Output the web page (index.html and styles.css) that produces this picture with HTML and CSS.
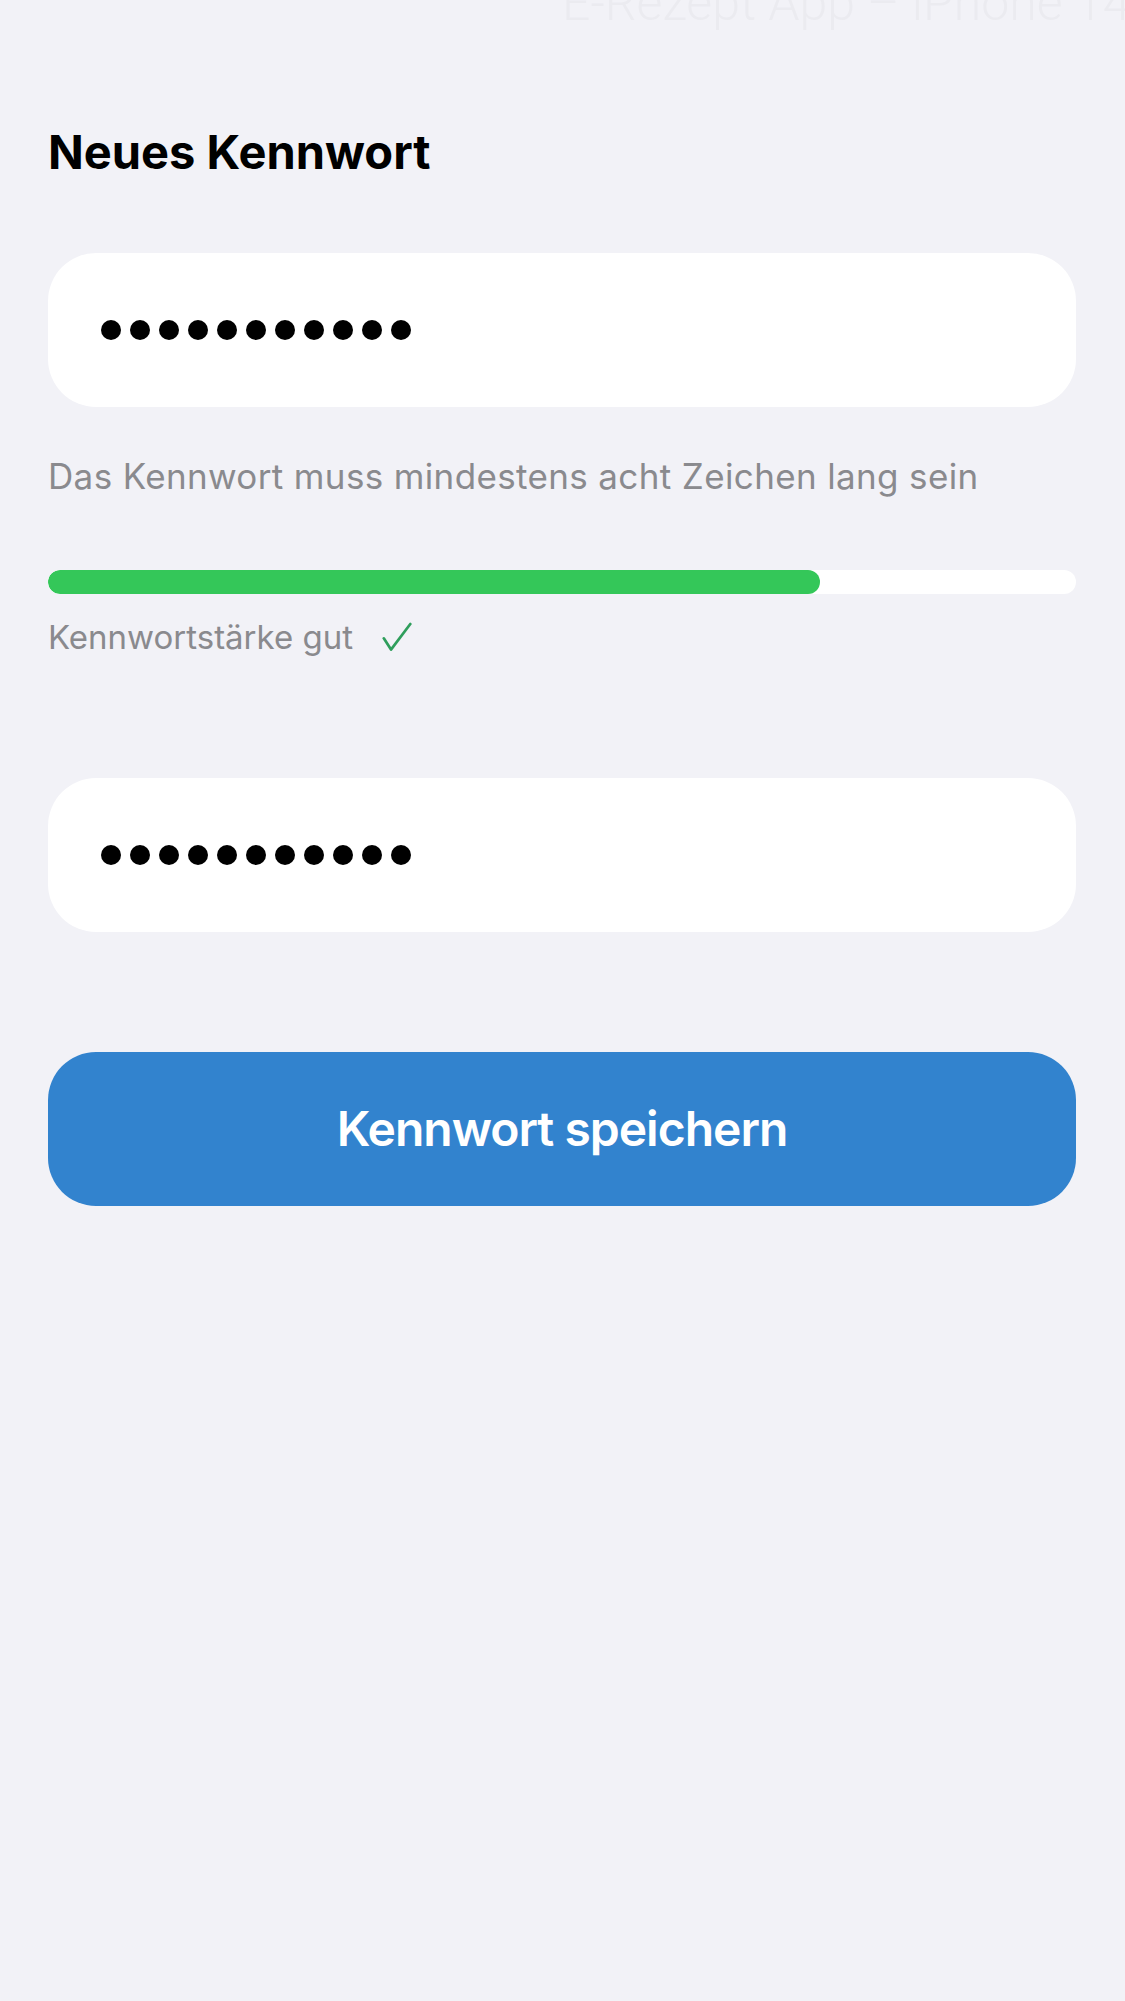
FILE: index.html
```html
<!DOCTYPE html>
<html lang="de">
<head>
<meta charset="utf-8">
<title>Neues Kennwort</title>
<link rel="stylesheet" href="styles.css">
</head>
<body>
<div class="watermark">E-Rezept App – iPhone 14</div>
<main class="screen">
  <h1 class="title">Neues Kennwort</h1>

  <div class="field">
    <div class="dots" aria-label="Kennwort">
      <span class="dot"></span><span class="dot"></span><span class="dot"></span><span class="dot"></span><span class="dot"></span><span class="dot"></span><span class="dot"></span><span class="dot"></span><span class="dot"></span><span class="dot"></span><span class="dot"></span>
    </div>
  </div>

  <p class="hint">Das Kennwort muss mindestens acht Zeichen lang sein</p>

  <div class="meter"><div class="meter-fill" style="width: 75.1%"></div></div>

  <div class="strength">
    <span class="strength-label">Kennwortstärke gut</span>
    <svg class="check" width="30" height="30" viewBox="0 0 30 30" aria-hidden="true">
      <polyline points="1.8,16.3 9,27.6 28.3,2" fill="none" stroke="#2f9e5c" stroke-width="2.7" stroke-linecap="round" stroke-linejoin="round"/>
    </svg>
  </div>

  <div class="field field-confirm">
    <div class="dots" aria-label="Kennwort wiederholen">
      <span class="dot"></span><span class="dot"></span><span class="dot"></span><span class="dot"></span><span class="dot"></span><span class="dot"></span><span class="dot"></span><span class="dot"></span><span class="dot"></span><span class="dot"></span><span class="dot"></span>
    </div>
  </div>

  <button class="save-button" type="button">Kennwort speichern</button>
</main>
</body>
</html>
```

FILE: styles.css
```css
* {
  box-sizing: border-box;
}

html, body {
  margin: 0;
  padding: 0;
  background: #f2f2f7;
}

body {
  position: relative;
  min-height: 2001px;
  overflow: hidden;
  font-family: Inter, "Noto Sans", "Liberation Sans", sans-serif;
  color: #000;
}

.watermark {
  position: absolute;
  left: 562px;
  top: -27px;
  font-family: Roboto, "Liberation Sans", sans-serif;
  font-weight: 300;
  font-size: 50px;
  line-height: 60px;
  color: #ebebf0;
  white-space: nowrap;
}

.screen {
  display: flex;
  flex-direction: column;
  padding: 124px 49px 0 48px;
}

.title {
  margin: 0;
  font-size: 47px;
  line-height: 56px;
  font-weight: 700;
  letter-spacing: 0;
}

.field {
  margin-top: 73px;
  height: 154px;
  background: #fff;
  border-radius: 48px;
  display: flex;
  align-items: center;
  padding-left: 53px;
}

.dots {
  display: flex;
  gap: 9px;
}

.dot {
  width: 20px;
  height: 20px;
  border-radius: 50%;
  background: #000;
}

.hint {
  margin: 47px 0 0;
  font-size: 35px;
  line-height: 44px;
  letter-spacing: 0.36px;
  color: #8a8a8e;
  font-weight: 400;
}

.meter {
  margin-top: 72px;
  height: 24px;
  border-radius: 12px;
  background: #fff;
  overflow: hidden;
}

.meter-fill {
  height: 100%;
  border-radius: 12px;
  background: #34c759;
}

.strength {
  margin-top: 23px;
  display: flex;
  align-items: center;
  gap: 29px;
}

.strength-label {
  font-size: 33px;
  line-height: 40px;
  color: #8a8a8e;
}

.check {
  display: block;
}

.field-confirm {
  margin-top: 121px;
}

.save-button {
  margin-top: 120px;
  height: 154px;
  border: 0;
  border-radius: 48px;
  background: #3283ce;
  color: #fff;
  font-family: Inter, "Noto Sans", "Liberation Sans", sans-serif;
  font-size: 48px;
  line-height: 58px;
  font-weight: 600;
  letter-spacing: -1px;
  padding: 0;
}
```
